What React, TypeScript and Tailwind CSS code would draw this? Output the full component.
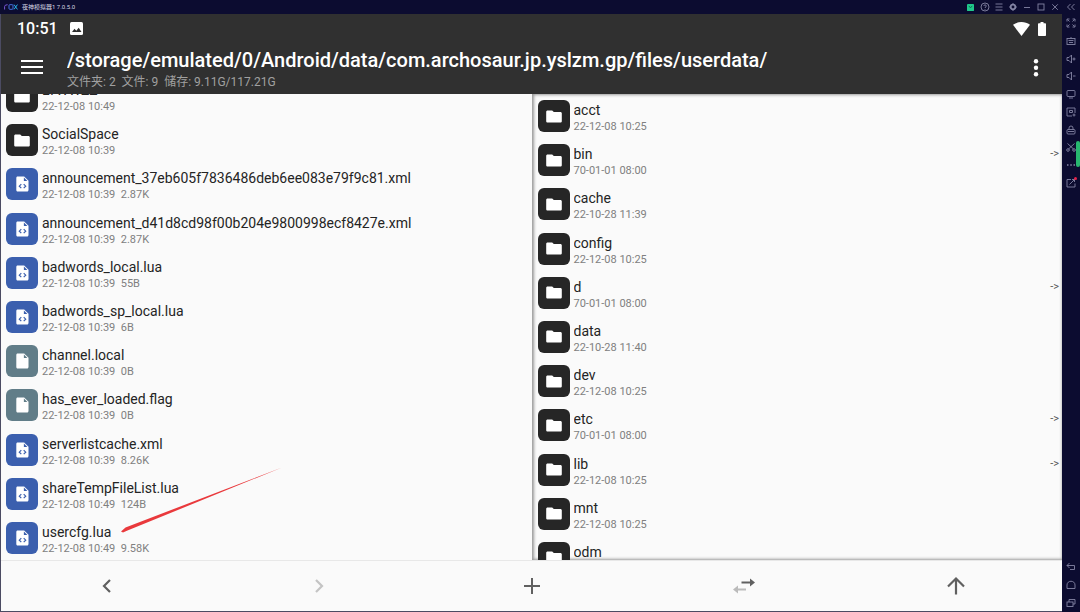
import React from 'react';

type Kind = 'folder' | 'code' | 'file';

interface Entry {
  name: string;
  date: string;
  size?: string;
  kind: Kind;
  link?: boolean;
}

const LEFT_ENTRIES: Entry[] = [
  { name: 'LTWWZZ', date: '22-12-08 10:49', kind: 'folder' },
  { name: 'SocialSpace', date: '22-12-08 10:39', kind: 'folder' },
  { name: 'announcement_37eb605f7836486deb6ee083e79f9c81.xml', date: '22-12-08 10:39', size: '2.87K', kind: 'code' },
  { name: 'announcement_d41d8cd98f00b204e9800998ecf8427e.xml', date: '22-12-08 10:39', size: '2.87K', kind: 'code' },
  { name: 'badwords_local.lua', date: '22-12-08 10:39', size: '55B', kind: 'code' },
  { name: 'badwords_sp_local.lua', date: '22-12-08 10:39', size: '6B', kind: 'code' },
  { name: 'channel.local', date: '22-12-08 10:39', size: '0B', kind: 'file' },
  { name: 'has_ever_loaded.flag', date: '22-12-08 10:39', size: '0B', kind: 'file' },
  { name: 'serverlistcache.xml', date: '22-12-08 10:39', size: '8.26K', kind: 'code' },
  { name: 'shareTempFileList.lua', date: '22-12-08 10:49', size: '124B', kind: 'code' },
  { name: 'usercfg.lua', date: '22-12-08 10:49', size: '9.58K', kind: 'code' },
];

const RIGHT_ENTRIES: Entry[] = [
  { name: 'acct', date: '22-12-08 10:25', kind: 'folder' },
  { name: 'bin', date: '70-01-01 08:00', kind: 'folder', link: true },
  { name: 'cache', date: '22-10-28 11:39', kind: 'folder' },
  { name: 'config', date: '22-12-08 10:25', kind: 'folder' },
  { name: 'd', date: '70-01-01 08:00', kind: 'folder', link: true },
  { name: 'data', date: '22-10-28 11:40', kind: 'folder' },
  { name: 'dev', date: '22-12-08 10:25', kind: 'folder' },
  { name: 'etc', date: '70-01-01 08:00', kind: 'folder', link: true },
  { name: 'lib', date: '22-12-08 10:25', kind: 'folder', link: true },
  { name: 'mnt', date: '22-12-08 10:25', kind: 'folder' },
  { name: 'odm', date: '22-12-08 10:25', kind: 'folder' },
];

const TILE_COLORS: Record<Kind, string> = {
  folder: 'bg-[#262626]',
  code: 'bg-[#3b5fae]',
  file: 'bg-[#617d88]',
};

const EntryIcon: React.FC<{ kind: Kind }> = ({ kind }) => (
  <span className={`flex size-8 shrink-0 items-center justify-center rounded-md ${TILE_COLORS[kind]}`}>
    {kind === 'folder' ? (
      <svg viewBox="0 0 16 13" className="h-[13px] w-4" fill="#fff">
        <path d="M1.6.5h4.600L7.800 2h6.600c.8 0 1.400.6 1.400 1.300v7.900c0 .7-.6 1.300-1.400 1.300H1.600c-.8 0-1.400-.6-1.400-1.300V1.800C.2 1.100.8.5 1.600.5z" />
      </svg>
    ) : (
      <svg viewBox="0 0 13 16" className="h-4 w-[13px]">
        <path d="M1.600.5h6.600l4.300 4.300v9.200c0 .8-.6 1.500-1.500 1.500H1.600C.8 15.500.3 14.800.3 14V2C.3 1.200.8.5 1.600.5z" fill="#fff" />
        {kind === 'code' ? (
          <>
            <path d="M7.900 1.600v3.500h3.500z" fill="#3b5fae" />
            <path d="M5.300 8.200L3.300 10.200l2 2M7.700 8.200l2 2-2 2" fill="none" stroke="#3b5fae" strokeWidth="1.200" />
          </>
        ) : (
          <path d="M7.900 1.600v3.500h3.500z" fill="#617d88" />
        )}
      </svg>
    )}
  </span>
);

const EntryRow: React.FC<{ entry: Entry }> = ({ entry }) => (
  <li>
    <button className="flex h-8 w-full items-start gap-1 text-left">
      <EntryIcon kind={entry.kind} />
      <span className="min-w-0 flex-1 pt-px">
        <span className="block truncate text-[14px] leading-[18px] text-[#242424]">{entry.name}</span>
        <span className="block text-[11px] leading-4 whitespace-pre text-[#808080]">
          {entry.size ? `${entry.date}  ${entry.size}` : entry.date}
        </span>
      </span>
      {entry.link && <span className="pt-px text-[11px] leading-[18px] text-[#555]">-&gt;</span>}
    </button>
  </li>
);

const FileList: React.FC<{ entries: Entry[]; className: string }> = ({ entries, className }) => (
  <ul className={`flex min-w-0 flex-1 flex-col justify-between ${className}`}>
    {entries.map(entry => <EntryRow key={entry.name} entry={entry} />)}
  </ul>
);

// Small stroked icons of the emulator frame, all on a 12x12 grid
const FRAME_ICONS: Record<string, React.ReactNode> = {
  Help: <><circle cx="6" cy="6" r="4" /><path d="M4.800 5c0-1.600 2.500-1.500 2.500 0C7.300 6 6 6 6 7M6 8v.8" /></>,
  Menu: <path d="M2.500 3h7M2.500 6h7M2.500 9h7" />,
  Settings: <><circle cx="6" cy="6" r="2.300" strokeWidth="1.700" /><path d="M6 2v1M6 9v1M2 6h1M9 6h1" /></>,
  Minimize: <path d="M3 6.500h6" />,
  Maximize: <rect x="3" y="3" width="6" height="6" />,
  Close: <path d="M3.300 3.300l5.500 5.500M8.800 3.300L3.300 8.800" />,
  Collapse: <path d="M5.500 3L2.500 6l3 3M9.500 3L6.500 6l3 3" />,
  'Full screen': <path d="M2 4.500V2h2.500M7.500 2H10v2.500M10 7.500V10H7.500M4.500 10H2V7.500M2.500 2.500l2 2M9.500 2.500l-2 2M9.500 9.500l-2-2M2.500 9.500l2-2" />,
  Keyboard: <><rect x="2" y="3.500" width="8" height="6" /><path d="M6 3.500V2M3.500 5.500h5M4 7.500h4" /></>,
  'Volume up': <path d="M2 4.500h2L6.500 2v8L4 7.500H2zM7.500 6h3M9 4.500v3" />,
  'Volume down': <path d="M2 4.500h2L6.500 2v8L4 7.500H2zM8 6h2.500" />,
  Screen: <><rect x="2" y="2.500" width="8" height="6" rx="1" /><path d="M4 10h4" /></>,
  'Install APK': <><path d="M10 7V2H2v8h5" /><path d="M4.500 4.500h3v2h-3zM9 7.500v3M7.500 9h3" /></>,
  'Multi player': <><rect x="2" y="5.500" width="8" height="4.500" rx="1" /><path d="M4 5.500V4a2 2 0 0 1 4 0v1.500M3 7.500h6" /></>,
  Scissors: <><path d="M2.500 2.500l6 5.500M9.500 2.500l-6 5.500" /><circle cx="3" cy="9" r="1.300" /><circle cx="9" cy="9" r="1.300" /></>,
  More: <path d="M2 6h1.500M5.300 6h1.500M8.500 6H10" strokeWidth="1.500" />,
  Share: <><path d="M6 2.500H2V10h8V6.500M4.500 7.500L9.500 2.500M7 2.500h2.500V5" /><circle cx="10.500" cy="1.500" r="1.500" fill="#e8224a" stroke="none" /></>,
  Back: <path d="M4.500 2L2 4.500 4.500 7M2 4.500h7.500v4H5" />,
  Home: <path d="M2 9.500V6c0-5 8-5 8 0v3.500z" />,
  Recents: <><rect x="2" y="5" width="6" height="4.500" /><path d="M4 5V2.500h6V7H8" /></>,
};

const FrameButton: React.FC<{ label: string }> = ({ label }) => (
  <button aria-label={label} className="flex size-3 items-center justify-center">
    <svg viewBox="0 0 12 12" className="size-3 overflow-visible" fill="none" stroke="#8485a4" strokeWidth="0.900">
      {FRAME_ICONS[label]}
    </svg>
  </button>
);

const TitleBar: React.FC = () => (
  <div className="flex h-[14px] shrink-0 items-center justify-between pl-1 pr-[3px]">
    <div className="flex items-center gap-1">
      <svg viewBox="0 0 14 6" className="h-[6px] w-[14px]" fill="none" strokeWidth="1">
        <path d="M.6 5.500V2.500Q.6.800 3.600.700" stroke="#7a55d8" />
        <path d="M5 1.500Q5 .7 6 .7h2Q9 .7 9 1.500v3Q9 5.300 8 5.300H6Q5 5.300 5 4.500z" stroke="#4870e0" />
        <path d="M10 .600l3.400 4.800M13.400.600L10 5.400" stroke="#27b0ea" />
      </svg>
      <span className="text-[6px] leading-[14px] text-[#d5d5e2]">夜神模拟器1 7.0.5.0</span>
    </div>
    <div className="flex items-center gap-[2px]">
      <button aria-label="Store" className="mr-[2px] flex size-[10px] items-center justify-center">
        <svg viewBox="0 0 8 8" className="size-[7px]">
          <rect width="8" height="8" rx="1" fill="#20c78b" />
          <path d="M2 2.500l2 1.500 2-1.500" fill="none" stroke="#0d5b48" />
        </svg>
      </button>
      <FrameButton label="Help" />
      <FrameButton label="Menu" />
      <FrameButton label="Settings" />
      <FrameButton label="Minimize" />
      <FrameButton label="Maximize" />
      <div className="flex gap-1">
        <FrameButton label="Close" />
        <FrameButton label="Collapse" />
      </div>
    </div>
  </div>
);

const SideBar: React.FC = () => (
  <nav className="relative flex w-[18px] shrink-0 flex-col items-center justify-between py-[3px]">
    <div className="flex h-[172px] flex-col justify-between">
      {['Full screen', 'Keyboard', 'Volume up', 'Volume down', 'Screen', 'Install APK', 'Multi player', 'Scissors', 'More', 'Share'].map(label => (
        <FrameButton key={label} label={label} />
      ))}
    </div>
    <span className="absolute top-[127px] right-0 h-[26px] w-1 rounded-sm bg-[#27b66f]" />
    <div className="flex flex-col gap-[6px]">
      {['Back', 'Home', 'Recents'].map(label => <FrameButton key={label} label={label} />)}
    </div>
  </nav>
);

const Header: React.FC = () => (
  <header className="flex h-20 shrink-0 flex-col bg-[#303030] text-white">
    <div className="flex h-7 items-center justify-between pt-px pl-4 pr-4">
      <div className="flex items-center gap-3">
        <span className="text-base font-medium">10:51</span>
        <svg viewBox="0 0 13 13" className="size-[13px]">
          <rect width="13" height="13" rx="1.500" fill="#fff" />
          <path d="M2 10l2.500-3.300 1.800 2.100 2.400-3.100L11.500 10z" fill="#303030" />
        </svg>
      </div>
      <div className="flex items-center gap-2">
        <svg viewBox="0 0 17 14" className="h-[14px] w-[17px]" fill="#fff">
          <path d="M0 2.800C5-.9 12-.9 17 2.800L8.500 14z" />
        </svg>
        <svg viewBox="0 0 8 14" className="h-[14px] w-2" fill="#fff">
          <path d="M2.500 0h3v1.200h1.700c.5 0 .8.3.8.800v11.200c0 .5-.3.800-.8.800H.8c-.5 0-.8-.3-.8-.8V2c0-.5.3-.8.8-.8h1.700z" />
        </svg>
      </div>
    </div>
    <div className="flex flex-1 items-center pl-5 pr-[22px]">
      <button aria-label="Menu" className="flex w-[46px] items-center">
        <svg viewBox="0 0 22 16" className="h-4 w-[22px]" stroke="#fff" strokeWidth="2">
          <path d="M0 1h22M0 7h22M0 13h22" />
        </svg>
      </button>
      <div className="min-w-0 flex-1 space-y-[2px] pt-[2px]">
        <h1 className="truncate text-xl leading-6 font-medium">/storage/emulated/0/Android/data/com.archosaur.jp.yslzm.gp/files/userdata/</h1>
        <p className="text-[12px] leading-4 whitespace-pre text-[#a0a0a0]">文件夹: 2  文件: 9  储存: 9.11G/117.21G</p>
      </div>
      <button aria-label="More options" className="flex h-5 w-[9px] items-center justify-center">
        <svg viewBox="0 0 6 18" className="h-[18px] w-[6px]" fill="#fff">
          <circle cx="3" cy="2.200" r="2.200" />
          <circle cx="3" cy="8.700" r="2.200" />
          <circle cx="3" cy="15.200" r="2.200" />
        </svg>
      </button>
    </div>
  </header>
);

const ToolButton: React.FC<{ label: string; children: React.ReactNode }> = ({ label, children }) => (
  <button aria-label={label} className="flex flex-1 items-center justify-center">
    <svg viewBox="0 0 24 24" className="size-6" fill="none" stroke="#606060" strokeWidth="2">
      {children}
    </svg>
  </button>
);

const BottomBar: React.FC = () => (
  <footer className="flex h-[51px] shrink-0 border-t border-[#e8e8e8] bg-[#fafafa]">
    <ToolButton label="Back"><path d="M15 6l-6 6 6 6" strokeWidth="2.200" /></ToolButton>
    <ToolButton label="Forward"><path d="M9 6l6 6-6 6" stroke="#c4c4c4" strokeWidth="2.200" /></ToolButton>
    <ToolButton label="New"><path d="M12 4v16M4 12h16" /></ToolButton>
    <ToolButton label="Swap panels">
      <path d="M9.500 8.500h9" />
      <path d="M18 4.500l5 4-5 4z" fill="#606060" stroke="none" />
      <path d="M14 15.500H5" stroke="#bbb" />
      <path d="M6 11.500l-5 4 5 4z" fill="#bbb" stroke="none" />
    </ToolButton>
    <ToolButton label="Up"><path d="M12 20.500V4.500M4 12.500L12 4.500l8 8" strokeWidth="2.200" /></ToolButton>
  </footer>
);

export default function App() {
  return (
    <div className="flex h-screen flex-col overflow-hidden bg-[#0c0c30] font-[Roboto,'Noto_Sans_CJK_SC',sans-serif]">
      <TitleBar />
      <div className="flex min-h-0 flex-1">
        <div className="flex min-w-0 flex-1 flex-col border-b border-l border-[#4b4b62]">
          <Header />
          <main className="relative grid min-h-0 flex-1 grid-cols-2 grid-rows-[minmax(0,1fr)] bg-[#fafafa]">
            <section className="flex min-w-0 overflow-hidden pl-[5px]">
              <FileList entries={LEFT_ENTRIES} className="-mt-[14px] mb-[6px]" />
            </section>
            <section className="flex min-w-0 overflow-hidden pr-[3px] pl-[6px] shadow-[inset_1px_0_3px_1px_#999]">
              <FileList entries={RIGHT_ENTRIES} className="mt-[6px] -mb-[14px]" />
            </section>
            <svg viewBox="0 0 162 66" className="pointer-events-none absolute bottom-[27px] left-[120px] h-[66px] w-[162px]">
              <path d="M0 64.500L4.500 60.500 161 .5 6.500 63.500 2 65.500z" fill="#e9393c" />
            </svg>
          </main>
          <BottomBar />
        </div>
        <SideBar />
      </div>
    </div>
  );
}
